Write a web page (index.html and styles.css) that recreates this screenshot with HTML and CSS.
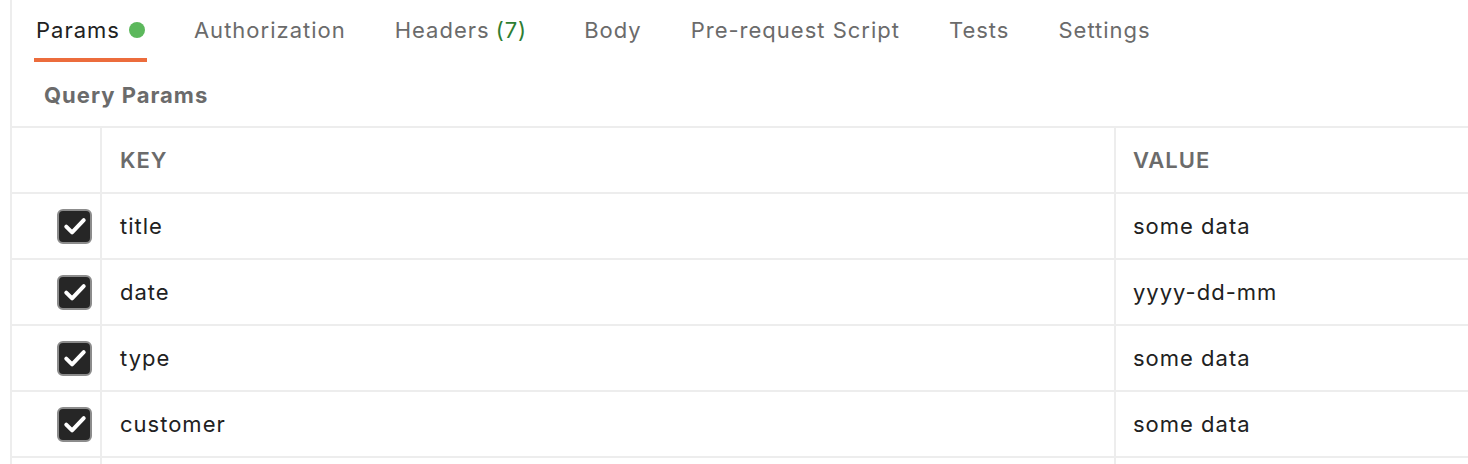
FILE: index.html
```html
<!DOCTYPE html>
<html>
<head>
<meta charset="utf-8">
<link rel="stylesheet" href="styles.css">
</head>
<body>
<div class="panel">
  <nav class="tabs">
    <div class="tab active">Params <span class="dot"></span></div>
    <div class="tab">Authorization</div>
    <div class="tab headers">Headers <span class="count">(7)</span></div>
    <div class="tab">Body</div>
    <div class="tab">Pre-request Script</div>
    <div class="tab">Tests</div>
    <div class="tab">Settings</div>
  </nav>
  <div class="section-title">Query Params</div>
  <div class="table">
    <div class="row head">
      <div class="cell check"></div>
      <div class="cell key">KEY</div>
      <div class="cell value">VALUE</div>
    </div>
    <div class="row">
      <div class="cell check"><span class="box"><svg viewBox="0 0 24 24" width="28" height="28"><path d="M4.5 12.5L9.5 17.5L19.5 7" fill="none" stroke="#fff" stroke-width="3.4" stroke-linecap="round" stroke-linejoin="round"/></svg></span></div>
      <div class="cell key">title</div>
      <div class="cell value">some data</div>
    </div>
    <div class="row">
      <div class="cell check"><span class="box"><svg viewBox="0 0 24 24" width="28" height="28"><path d="M4.5 12.5L9.5 17.5L19.5 7" fill="none" stroke="#fff" stroke-width="3.4" stroke-linecap="round" stroke-linejoin="round"/></svg></span></div>
      <div class="cell key">date</div>
      <div class="cell value">yyyy-dd-mm</div>
    </div>
    <div class="row">
      <div class="cell check"><span class="box"><svg viewBox="0 0 24 24" width="28" height="28"><path d="M4.5 12.5L9.5 17.5L19.5 7" fill="none" stroke="#fff" stroke-width="3.4" stroke-linecap="round" stroke-linejoin="round"/></svg></span></div>
      <div class="cell key">type</div>
      <div class="cell value">some data</div>
    </div>
    <div class="row">
      <div class="cell check"><span class="box"><svg viewBox="0 0 24 24" width="28" height="28"><path d="M4.5 12.5L9.5 17.5L19.5 7" fill="none" stroke="#fff" stroke-width="3.4" stroke-linecap="round" stroke-linejoin="round"/></svg></span></div>
      <div class="cell key">customer</div>
      <div class="cell value">some data</div>
    </div>
    <div class="row">
      <div class="cell check"></div>
      <div class="cell key"></div>
      <div class="cell value"></div>
    </div>
  </div>
</div>
</body>
</html>
```
FILE: styles.css
```css
html, body {
  margin: 0;
  padding: 0;
  background: #fff;
  overflow: hidden;
}
body {
  font-family: Inter, "Noto Sans", sans-serif;
  color: #212121;
  height: 464px;
  letter-spacing: 1px;
}
.panel {
  margin-left: 10px;
  border-left: 2px solid #ededed;
  height: 464px;
  overflow: hidden;
}
.tabs {
  display: flex;
  padding-left: 22px;
  gap: 45px;
}
.tab {
  font-size: 22px;
  line-height: 28px;
  padding: 16px 2px 14px;
  border-bottom: 4px solid transparent;
  color: #6b6b6b;
  white-space: nowrap;
  display: flex;
  align-items: center;
}
.tab.active {
  color: #212121;
  border-bottom-color: #ec6c3c;
}
.dot {
  display: inline-block;
  width: 16px;
  height: 16px;
  border-radius: 50%;
  background: #5cb85c;
  margin-left: 9px;
}
.count {
  color: #2e7d32;
  margin-left: 6px;
}
.headers {
  margin-right: 8px;
}
.section-title {
  font-size: 22px;
  font-weight: 700;
  color: #6b6b6b;
  line-height: 64px;
  padding-top: 1px;
  height: 63px;
  padding-left: 32px;
}
.table {
  border-top: 2px solid #ededed;
}
.row {
  display: grid;
  grid-template-columns: 90px 1014px 1fr;
  border-bottom: 2px solid #ededed;
  height: 64px;
}
.cell {
  display: flex;
  align-items: center;
  font-size: 22px;
}
.check {
  border-right: 2px solid #ededed;
  justify-content: flex-end;
  padding-right: 8px;
}
.key {
  border-right: 2px solid #ededed;
  padding-left: 18px;
}
.value {
  padding-left: 17px;
}
.head .cell {
  font-weight: 600;
  color: #6b6b6b;
  font-size: 22px;
}
.box {
  width: 31px;
  height: 31px;
  background: #262626;
  border: 2px solid #8c8c8c;
  border-radius: 6px;
  display: flex;
  align-items: center;
  justify-content: center;
}
```
